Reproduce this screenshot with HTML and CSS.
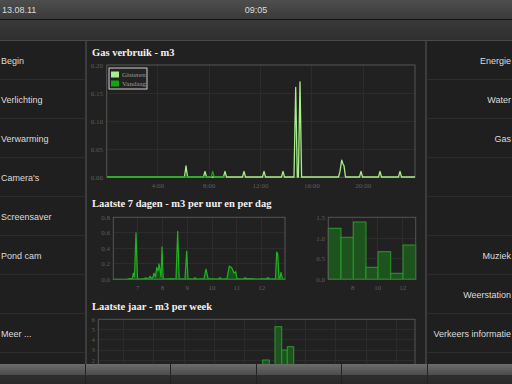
FILE: index.html
```html
<!DOCTYPE html>
<html lang="nl">
<head>
    <meta charset="UTF-8">
    <title>Domotica</title>
    <link rel="stylesheet" href="styles.css">
</head>
<body>
    <div class="top-bar">
        <span class="date">13.08.11</span>
        <span class="clock">09:05</span>
    </div>
    <div class="sub-bar"></div>

    <div class="main">
        <nav class="side side-left">
            <div class="nav-item">Begin</div>
            <div class="nav-item">Verlichting</div>
            <div class="nav-item">Verwarming</div>
            <div class="nav-item">Camera's</div>
            <div class="nav-item">Screensaver</div>
            <div class="nav-item">Pond cam</div>
            <div class="nav-item"></div>
            <div class="nav-item">Meer ...</div>
            <div class="nav-item"></div>
        </nav>

        <section class="content">
            <h2 class="chart-title first">Gas verbruik - m3</h2>
            <svg class="chart chart-day" width="338" height="132" viewBox="0 0 338 132">
                <g class="grid">
                    <line x1="70.7" y1="5" x2="70.7" y2="117.3"/>
                    <line x1="122.1" y1="5" x2="122.1" y2="117.3"/>
                    <line x1="173.5" y1="5" x2="173.5" y2="117.3"/>
                    <line x1="224.9" y1="5" x2="224.9" y2="117.3"/>
                    <line x1="276.3" y1="5" x2="276.3" y2="117.3"/>
                    <line x1="19.7" y1="33.3" x2="328" y2="33.3"/>
                    <line x1="19.7" y1="61.3" x2="328" y2="61.3"/>
                    <line x1="19.7" y1="89.3" x2="328" y2="89.3"/>
                </g>
                <rect class="frame" x="19.7" y="5" width="308.3" height="112.3"/>
                <g class="ticks" text-anchor="end">
                    <text x="16" y="7.5">0.20</text>
                    <text x="16" y="35.5">0.15</text>
                    <text x="16" y="63.5">0.10</text>
                    <text x="16" y="91.5">0.05</text>
                    <text x="16" y="119.5">0.00</text>
                </g>
                <g class="ticks" text-anchor="middle">
                    <text x="70.7" y="127.5">4:00</text>
                    <text x="122.1" y="127.5">8:00</text>
                    <text x="173.5" y="127.5">12:00</text>
                    <text x="224.9" y="127.5">16:00</text>
                    <text x="276.3" y="127.5">20:00</text>
                </g>
                <!-- gisteren -->
                <polyline class="line-light" points="20,117 97.5,117 99,105.8 100.5,117 116.5,117 118,111.4 119.5,117 136.5,117 138,111.4 139.5,117 155.5,117 157,111.4 158.5,117 175.5,117 177,111.4 178.5,117 194.5,117 196,111.4 197.5,117 207,117 208.7,27.4 210.3,117 211.4,117 213,21.8 214.6,117 251.5,117 253,111.4 254.7,100.2 256,104 257,105.8 258.5,117 272.5,117 274,111.4 275.5,117 291.5,117 293,111.4 294.5,117 311.5,117 313,111.4 314.5,117 328,117"/>
                <!-- vandaag -->
                <polyline class="line-dark" points="20,117 124.2,117 125.7,111.4 127.2,117 137,117"/>
                <g class="legend">
                    <rect class="legend-box" x="22" y="8" width="38" height="21"/>
                    <rect x="24" y="11.5" width="8" height="6" fill="#a8ee8c"/>
                    <rect x="24" y="20.5" width="8" height="6" fill="#12a512"/>
                    <text x="35" y="17">Gisteren</text>
                    <text x="35" y="26">Vandaag</text>
                </g>
            </svg>

            <h2 class="chart-title">Laatste 7 dagen - m3 per uur en per dag</h2>
            <svg class="chart chart-week" width="338" height="82" viewBox="0 0 338 82">
                <g class="grid">
                    <line x1="50.7" y1="6.3" x2="50.7" y2="68.3"/>
                    <line x1="75.5" y1="6.3" x2="75.5" y2="68.3"/>
                    <line x1="100.3" y1="6.3" x2="100.3" y2="68.3"/>
                    <line x1="125.1" y1="6.3" x2="125.1" y2="68.3"/>
                    <line x1="149.9" y1="6.3" x2="149.9" y2="68.3"/>
                    <line x1="174.7" y1="6.3" x2="174.7" y2="68.3"/>
                    <line x1="26.3" y1="21.8" x2="198" y2="21.8"/>
                    <line x1="26.3" y1="37.3" x2="198" y2="37.3"/>
                    <line x1="26.3" y1="52.8" x2="198" y2="52.8"/>
                    <line x1="265.7" y1="6.3" x2="265.7" y2="68.3"/>
                    <line x1="290.7" y1="6.3" x2="290.7" y2="68.3"/>
                    <line x1="315.7" y1="6.3" x2="315.7" y2="68.3"/>
                    <line x1="241.3" y1="27" x2="328.7" y2="27"/>
                    <line x1="241.3" y1="47.7" x2="328.7" y2="47.7"/>
                </g>
                <path class="area" d="M26.3,68.3 L40,68.3 L42,67.5 L44,67.8 L45.5,67 L46.3,62.1 L47.5,66 L49,21.8 L50.5,67.5 L52,68 L57,67.5 L59,66.8 L60.5,68 L62,67 L63,65.2 L64.5,67.5 L66,66 L67,62.1 L68.5,66 L69.7,56.7 L71,60 L72,52.8 L73.3,60.6 L74,66 L75,35.8 L76.2,67.5 L78,68 L85,67.5 L89,68 L90.7,20.3 L92.2,67.5 L95,68 L98,67.5 L99.7,40.4 L101,67.5 L106,68 L108,66.8 L110,68 L117,67.5 L119,58.2 L121,67.5 L131,68 L133,66.8 L135,68 L140,67.5 L142.3,55.1 L144.7,56.7 L147,62.1 L148.7,60.6 L150,67.5 L156,68 L158,66.8 L160,67.5 L163,67.5 L170,68 L179,67.5 L181.3,66.8 L183,68 L188.5,67.5 L189.7,41.2 L190.7,42.7 L192,67.5 L193,67 L194,61.3 L195.5,67.8 L198,68.3 Z"/>
                <rect class="frame" x="26.3" y="6.3" width="171.7" height="62"/>
                <g class="bars">
                    <rect x="241.3" y="17.3" width="12.7" height="51"/>
                    <rect x="254" y="26.3" width="12.3" height="42"/>
                    <rect x="266.3" y="11" width="12.7" height="57.3"/>
                    <rect x="279" y="56.3" width="12" height="12"/>
                    <rect x="291" y="40.7" width="12.7" height="27.6"/>
                    <rect x="303.7" y="62.3" width="12.3" height="6"/>
                    <rect x="316" y="34" width="12.7" height="34.3"/>
                </g>
                <rect class="frame" x="241.3" y="6.3" width="87.4" height="62"/>
                <g class="ticks" text-anchor="end">
                    <text x="23" y="8.8">0.8</text>
                    <text x="23" y="24.3">0.6</text>
                    <text x="23" y="39.8">0.4</text>
                    <text x="23" y="55.3">0.2</text>
                    <text x="23" y="70.8">0.0</text>
                    <text x="238" y="8.8">1.5</text>
                    <text x="238" y="29.5">1.0</text>
                    <text x="238" y="50.2">0.5</text>
                    <text x="238" y="70.8">0.0</text>
                </g>
                <g class="ticks" text-anchor="middle">
                    <text x="50.7" y="78.5">7</text>
                    <text x="75.5" y="78.5">8</text>
                    <text x="100.3" y="78.5">9</text>
                    <text x="125.1" y="78.5">10</text>
                    <text x="149.9" y="78.5">11</text>
                    <text x="174.7" y="78.5">12</text>
                    <text x="265.7" y="78.5">8</text>
                    <text x="290.7" y="78.5">10</text>
                    <text x="315.7" y="78.5">12</text>
                </g>
            </svg>

            <h2 class="chart-title">Laatste jaar - m3 per week</h2>
            <svg class="chart chart-year" width="338" height="70" viewBox="0 0 338 70">
                <g class="grid">
                    <line x1="36.3" y1="5.3" x2="36.3" y2="67"/>
                    <line x1="66.3" y1="5.3" x2="66.3" y2="67"/>
                    <line x1="97" y1="5.3" x2="97" y2="67"/>
                    <line x1="127.3" y1="5.3" x2="127.3" y2="67"/>
                    <line x1="157.3" y1="5.3" x2="157.3" y2="67"/>
                    <line x1="188" y1="5.3" x2="188" y2="67"/>
                    <line x1="218" y1="5.3" x2="218" y2="67"/>
                    <line x1="248.7" y1="5.3" x2="248.7" y2="67"/>
                    <line x1="279.7" y1="5.3" x2="279.7" y2="67"/>
                    <line x1="309.7" y1="5.3" x2="309.7" y2="67"/>
                    <line x1="11.3" y1="15.5" x2="328" y2="15.5"/>
                    <line x1="11.3" y1="25.8" x2="328" y2="25.8"/>
                    <line x1="11.3" y1="36.1" x2="328" y2="36.1"/>
                    <line x1="11.3" y1="46.4" x2="328" y2="46.4"/>
                    <line x1="11.3" y1="56.7" x2="328" y2="56.7"/>
                </g>
                <g class="bars">
                    <rect x="175.7" y="46" width="6.6" height="21"/>
                    <rect x="188" y="12.7" width="6.7" height="54.3"/>
                    <rect x="194.7" y="36" width="5.6" height="31"/>
                    <rect x="200.3" y="32.7" width="6.4" height="34.3"/>
                </g>
                <rect class="frame" x="11.3" y="5.3" width="316.7" height="70"/>
                <g class="ticks" text-anchor="end">
                    <text x="8" y="7.6">6</text>
                    <text x="8" y="17.8">5</text>
                    <text x="8" y="28.1">4</text>
                    <text x="8" y="38.4">3</text>
                    <text x="8" y="48.7">2</text>
                </g>
            </svg>
        </section>

        <nav class="side side-right">
            <div class="nav-item">Energie</div>
            <div class="nav-item">Water</div>
            <div class="nav-item">Gas</div>
            <div class="nav-item"></div>
            <div class="nav-item"></div>
            <div class="nav-item">Muziek</div>
            <div class="nav-item">Weerstation</div>
            <div class="nav-item">Verkeers informatie</div>
            <div class="nav-item"></div>
        </nav>
    </div>

    <div class="bottom-bar">
        <div class="tab"></div>
        <div class="tab"></div>
        <div class="tab"></div>
        <div class="tab"></div>
        <div class="tab"></div>
        <div class="tab"></div>
    </div>
</body>
</html>
```

FILE: styles.css
```css
html, body {
    margin: 0;
    padding: 0;
}

body {
    width: 512px;
    height: 384px;
    overflow: hidden;
    background-color: #1e1e1e;
    font-family: "Liberation Sans", Arial, sans-serif;
    font-size: 9px;
    color: #dcdcdc;
    display: flex;
    flex-direction: column;
}

.top-bar {
    height: 19px;
    border-bottom: 1px solid #141414;
    background: linear-gradient(#4e4e4e, #3a3a3a);
    position: relative;
    display: flex;
    align-items: center;
    padding-left: 2px;
}

.clock {
    position: absolute;
    left: 0;
    right: 0;
    text-align: center;
}

.sub-bar {
    height: 20px;
    border-bottom: 1px solid #4a4a4a;
    background: linear-gradient(#383838, #303030);
}

.main {
    height: 323px;
    display: flex;
    overflow: hidden;
}

.side {
    width: 85px;
    flex-shrink: 0;
    background-color: #1f1f1f;
    display: flex;
    flex-direction: column;
}

.side-left {
    border-right: 2px solid #3c3c3c;
}

.side-right {
    border-left: 2px solid #3c3c3c;
}

.nav-item {
    height: 38px;
    flex-shrink: 0;
    border-bottom: 1px solid #2c2c2c;
    display: flex;
    align-items: center;
    padding: 1px 1px 0;
    box-sizing: border-box;
    height: 39px;
    white-space: nowrap;
    overflow: hidden;
}

.side-right .nav-item {
    justify-content: flex-end;
}

.content {
    width: 338px;
    flex-shrink: 0;
    background-color: #212121;
    overflow: hidden;
}

.chart-title {
    margin: 5px 0 0 5px;
    height: 14px;
    line-height: 14px;
    font-family: "Liberation Serif", "Times New Roman", serif;
    font-size: 10.5px;
    font-weight: bold;
    color: #f2f2f2;
}

.chart {
    display: block;
}

.chart-week + .chart-title {
    margin-top: 7px;
}

.grid line {
    stroke: #2c2c2c;
    stroke-width: 1;
    shape-rendering: crispEdges;
}

.frame {
    fill: none;
    stroke: #565656;
    stroke-width: 1;
}

.ticks text {
    font-family: "Liberation Serif", serif;
    font-size: 7px;
    fill: #5e5e5e;
}

.line-light {
    fill: none;
    stroke: #a8ee8c;
    stroke-width: 1.3;
    stroke-linejoin: round;
}

.line-dark {
    fill: none;
    stroke: #12a512;
    stroke-width: 1.3;
    stroke-linejoin: round;
}

.legend-box {
    fill: #232323;
    stroke: #cfcfcf;
    stroke-width: 1;
}

.legend text {
    font-family: "Liberation Serif", serif;
    font-size: 7px;
    fill: #9a9a9a;
}

.area {
    fill: rgba(20, 160, 20, 0.35);
    stroke: #1fb41f;
    stroke-width: 1.2;
    stroke-linejoin: round;
}

.bars rect {
    fill: #1d541d;
    stroke: #2a9a2a;
    stroke-width: 1;
}

.bottom-bar {
    height: 20px;
    display: flex;
}

.tab {
    flex: 1;
    border-left: 1px solid #222;
    background: linear-gradient(#6c6c6c, #4c4c4c 55%, #2e2e2e 55%, #2a2a2a);
}

.tab:first-child {
    border-left: none;
}
```
